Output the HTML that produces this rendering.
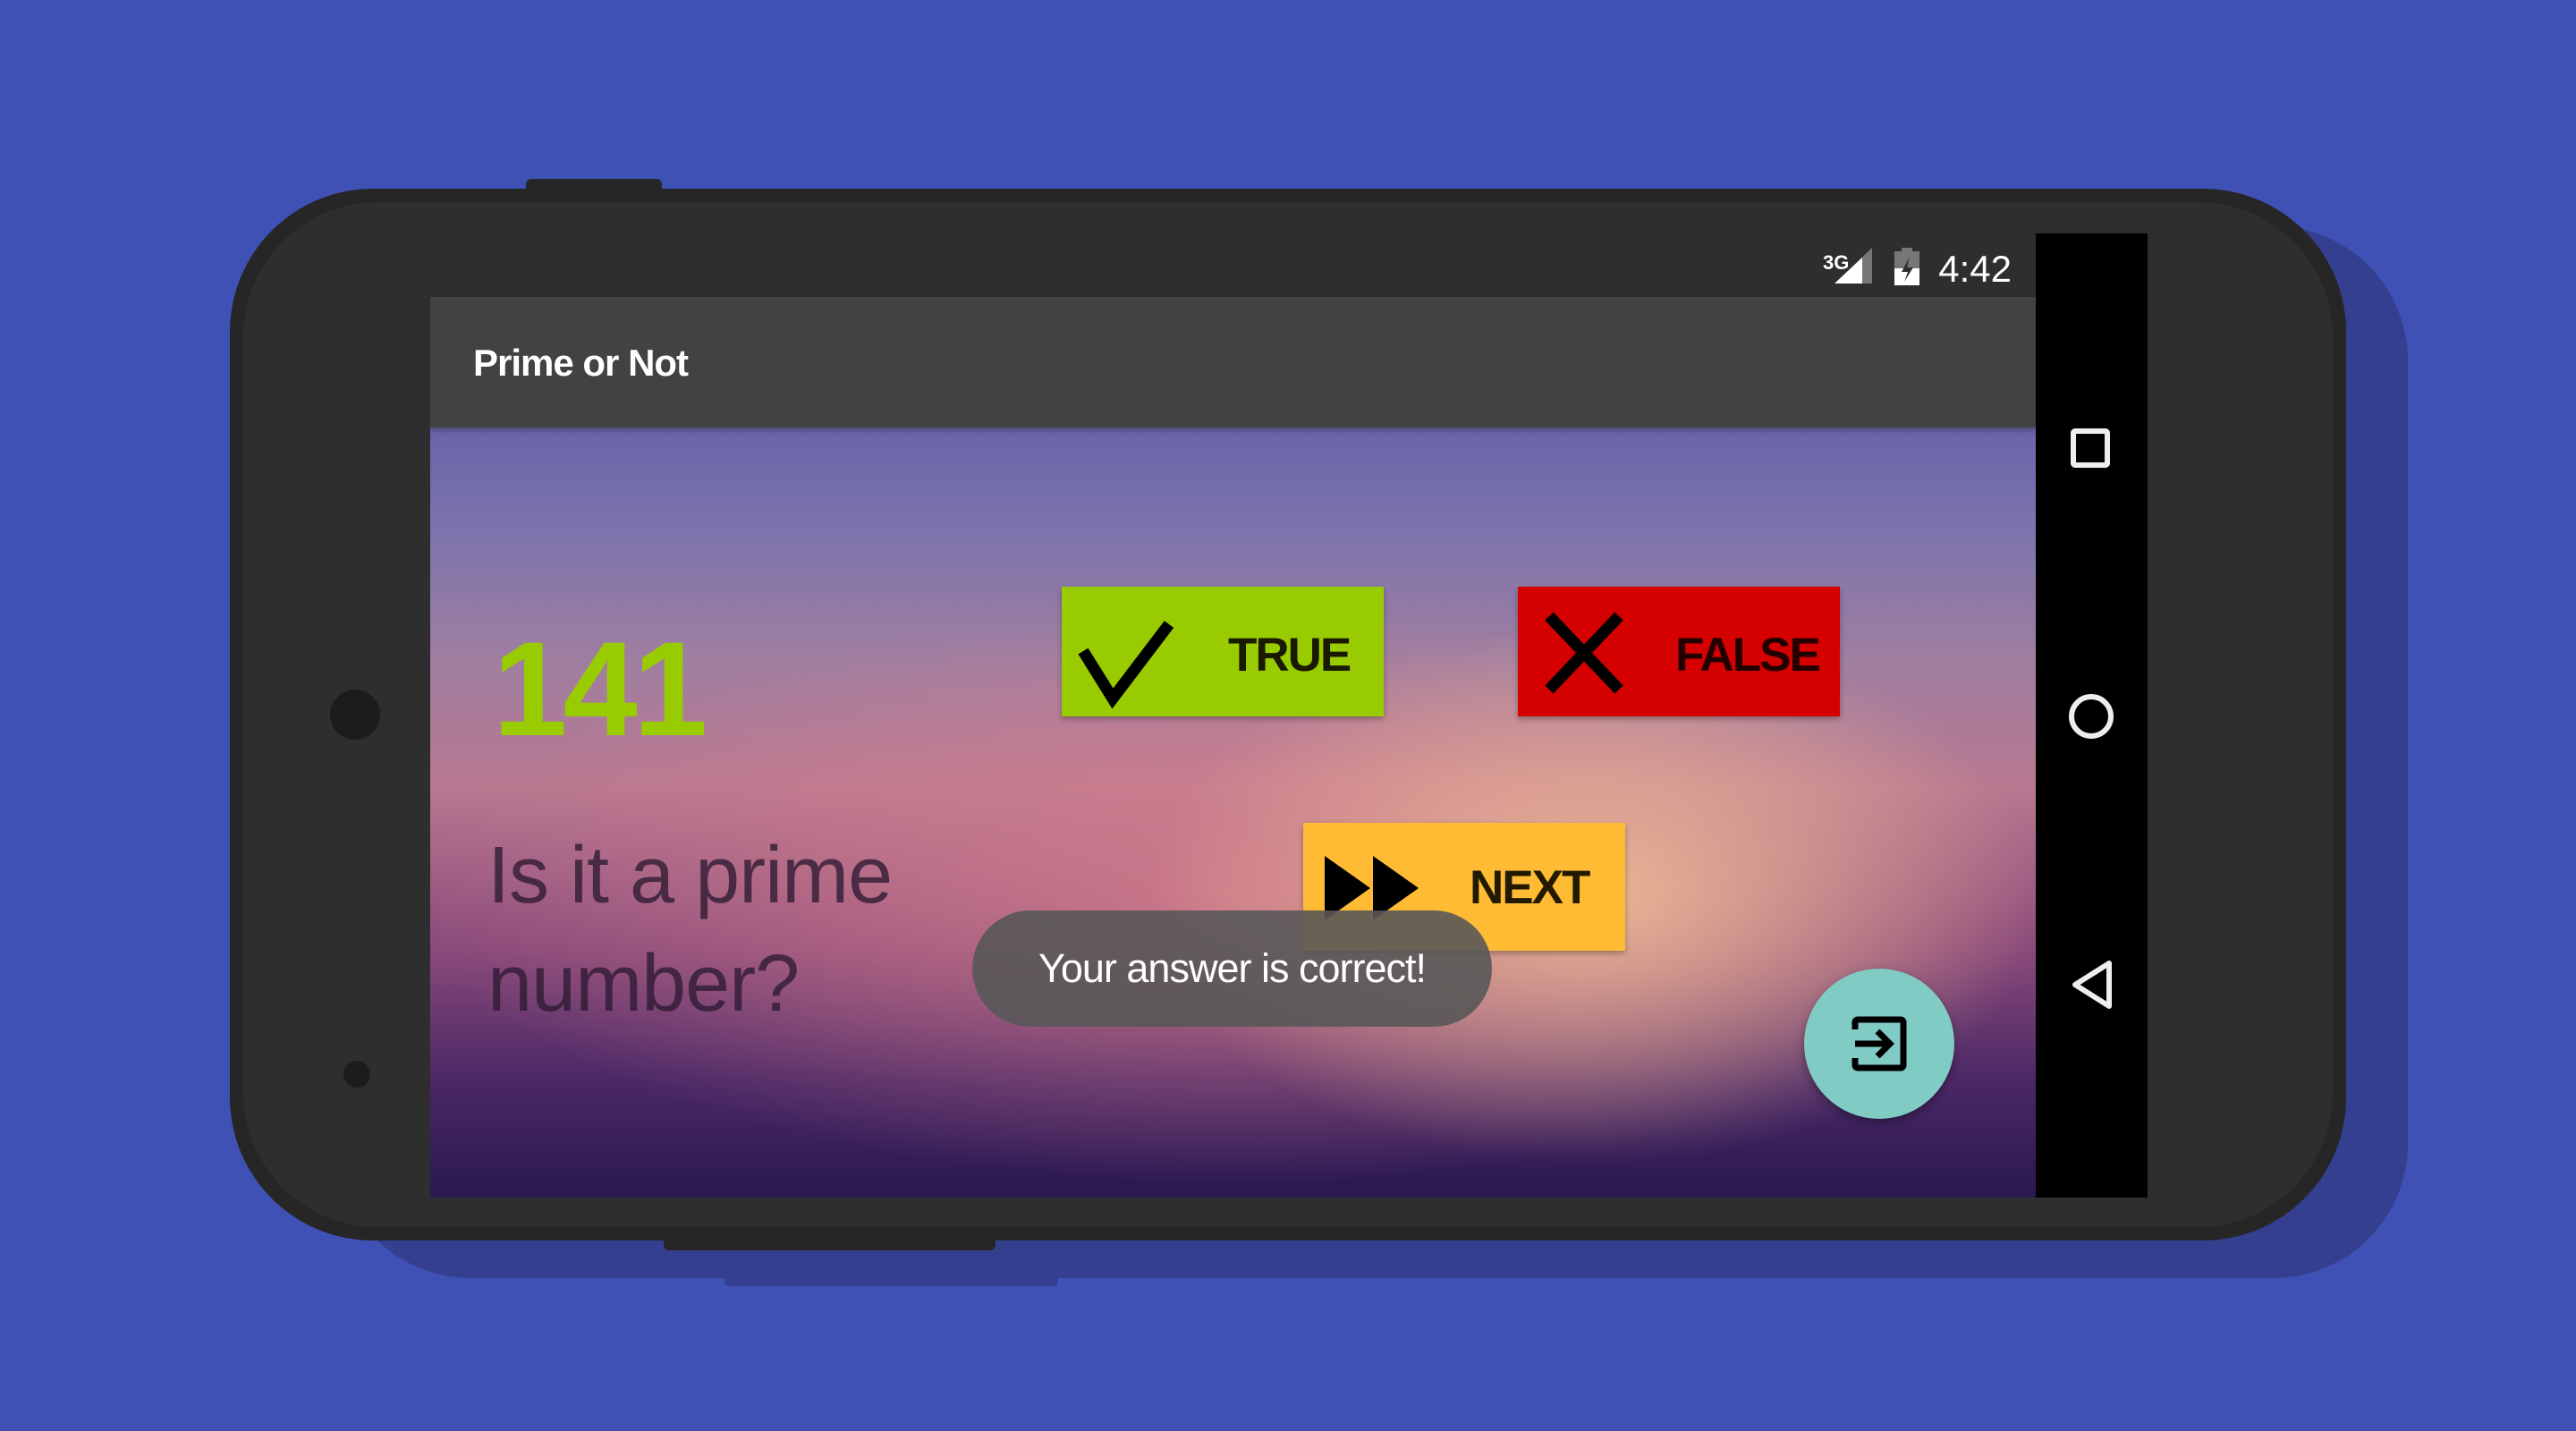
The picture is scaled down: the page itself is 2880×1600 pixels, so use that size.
<!DOCTYPE html>
<html><head><meta charset="utf-8"><style>
*{margin:0;padding:0;box-sizing:border-box}
body{width:2880px;height:1600px;background:#3f51b5;position:relative;overflow:hidden;font-family:"Liberation Sans",sans-serif}
.a{position:absolute}
</style></head><body>
<div class="a" style="left:376px;top:253px;width:2316px;height:1176px;border-radius:150px;background:#34408f"></div>
<div class="a" style="left:810px;top:1420px;width:373px;height:18px;background:#34408f;border-radius:4px"></div>
<div class="a" style="left:588px;top:200px;width:152px;height:20px;background:#262626;border-radius:6px 6px 0 0"></div>
<div class="a" style="left:742px;top:1380px;width:371px;height:18px;background:#262626;border-radius:0 0 6px 6px"></div>
<div class="a" style="left:257px;top:211px;width:2366px;height:1176px;border-radius:160px;background:#262626"></div>
<div class="a" style="left:272px;top:226px;width:2336px;height:1146px;border-radius:150px;background:#2e2e2e"></div>
<div class="a" style="left:369px;top:771px;width:56px;height:56px;border-radius:50%;background:#1c1c1c"></div>
<div class="a" style="left:384px;top:1186px;width:30px;height:30px;border-radius:50%;background:#1c1c1c"></div>
<!-- screen -->
<div class="a" style="left:481px;top:261px;width:1795px;height:1078px;overflow:hidden;background:
radial-gradient(ellipse 500px 300px at 1300px 740px,rgba(240,190,150,.9),rgba(240,190,150,0) 100%),
radial-gradient(ellipse 900px 320px at 900px 740px,rgba(220,130,140,.75),rgba(220,130,140,0) 100%),
linear-gradient(180deg,#4a4595 0px,#5d5aa8 150px,#7c74ad 330px,#a07ea0 480px,#b87890 620px,#8a4a7a 800px,#4a2866 950px,#2a1850 1078px)">
 <div class="a" style="left:0;top:0;width:1795px;height:71px;background:#2e2e2e"></div>
 <div class="a" style="left:0;top:71px;width:1795px;height:146px;background:#424242;box-shadow:0 3px 6px rgba(0,0,0,.3)"></div>
 <div class="a" style="left:48px;top:121px;color:#fff;font-size:42px;font-weight:bold;letter-spacing:-1px">Prime or Not</div>
 <svg class="a" style="left:0;top:0" width="1795" height="71">
  <text x="1557" y="40" fill="#fff" font-size="22" font-weight="bold" font-family="Liberation Sans">3G</text>
  <polygon points="1570,56 1612,16 1612,56" fill="#777"/>
  <polygon points="1570,56 1601,27 1601,56" fill="#fff"/>
  <rect x="1637" y="20" width="28" height="38" fill="#777"/><rect x="1645" y="16" width="12" height="5" fill="#777"/>
  <rect x="1637" y="39" width="28" height="19" fill="#fff"/>
  <polygon points="1654,26 1645,43 1652,43 1648,54 1658,38 1651,38" fill="#2e2e2e"/>
  <text x="1768" y="54" fill="#fff" font-size="42" text-anchor="end" font-family="Liberation Sans">4:42</text>
 </svg>
 <div class="a" style="left:70px;top:434px;color:#99cc00;font-size:150px;font-weight:bold;line-height:1;letter-spacing:-5px">141</div>
 <div class="a" style="left:64px;top:658px;color:rgba(45,25,50,.78);font-size:90px;line-height:121px;letter-spacing:-1px">Is it a prime<br>number?</div>
 <!-- TRUE -->
 <div class="a" style="left:706px;top:395px;width:360px;height:145px;background:#99cc00;box-shadow:0 3px 6px rgba(0,0,0,.3)">
  <svg class="a" style="left:0;top:0" width="360" height="145"><polyline points="24,72 57,125 120,42" fill="none" stroke="#000" stroke-width="13"/></svg>
  <div class="a" style="left:186px;top:46px;font-size:53px;color:#1a1a00;font-weight:bold;letter-spacing:-2px">TRUE</div>
 </div>
 <!-- FALSE -->
 <div class="a" style="left:1216px;top:395px;width:360px;height:145px;background:#d50000;box-shadow:0 3px 6px rgba(0,0,0,.3)">
  <svg class="a" style="left:0;top:0" width="360" height="145"><path d="M35,33 L113,115 M113,33 L35,115" stroke="#000" stroke-width="13"/></svg>
  <div class="a" style="left:176px;top:46px;font-size:53px;color:#220000;font-weight:bold;letter-spacing:-2px">FALSE</div>
 </div>
 <!-- NEXT -->
 <div class="a" style="left:976px;top:659px;width:360px;height:143px;background:#ffbb33;box-shadow:0 3px 6px rgba(0,0,0,.3)">
  <svg class="a" style="left:0;top:0" width="360" height="143"><polygon points="24,37 75,73 24,109" fill="#000"/><polygon points="78,37 129,73 78,109" fill="#000"/></svg>
  <div class="a" style="left:186px;top:42px;font-size:53px;color:#221a00;font-weight:bold;letter-spacing:-2px">NEXT</div>
 </div>
 <!-- toast -->
 <div class="a" style="left:606px;top:757px;width:581px;height:130px;border-radius:65px;background:rgba(88,88,88,.9);color:#fff;font-size:45px;text-align:center;line-height:130px;letter-spacing:-1px">Your answer is correct!</div>
 <!-- FAB -->
 <div class="a" style="left:1536px;top:822px;width:168px;height:168px;border-radius:50%;background:#80cbc4;box-shadow:0 4px 10px rgba(0,0,0,.35)">
  <svg class="a" style="left:0;top:0" width="168" height="168"><path d="M57,68 V60 a3,3 0 0 1 3,-3 H108 a3,3 0 0 1 3,3 V108 a3,3 0 0 1 -3,3 H60 a3,3 0 0 1 -3,-3 V100" fill="none" stroke="#000" stroke-width="7"/><path d="M57,84 H96 M82,70 L96,84 L82,98" fill="none" stroke="#000" stroke-width="7"/></svg>
 </div>
</div>
<!-- nav bar -->
<div class="a" style="left:2276px;top:261px;width:125px;height:1078px;background:#000">
 <svg width="125" height="1078"><rect x="42" y="221" width="38" height="38" fill="none" stroke="#eee" stroke-width="6" rx="2"/><circle cx="62" cy="540" r="22" fill="none" stroke="#eee" stroke-width="6"/><polygon points="82,816 44,840 82,864" fill="none" stroke="#eee" stroke-width="6" stroke-linejoin="round"/></svg>
</div>
</body></html>
